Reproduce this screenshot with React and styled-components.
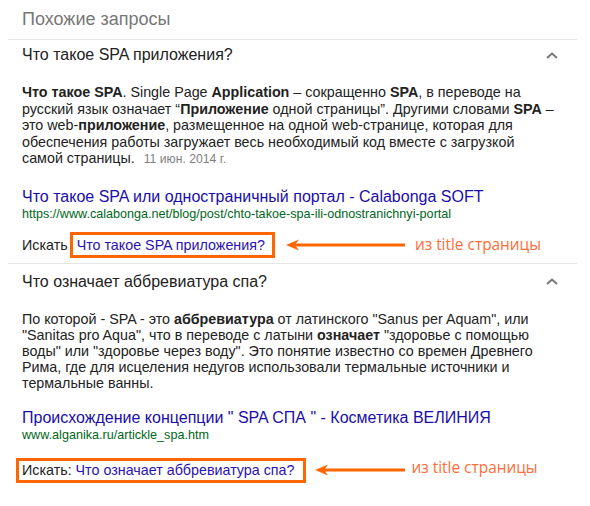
import React from "react";
import styled, { createGlobalStyle } from "styled-components";

const Global = createGlobalStyle`
  html, body { margin: 0; padding: 0; background: #fff; }
  body { font-family: Arial, "Liberation Sans", sans-serif; }
`;

const Page = styled.div`
  width: 590px;
  height: 506px;
  overflow: hidden;
  background: #fff;
  padding-left: 8px;
  box-sizing: border-box;
`;

const Panel = styled.div`
  width: 569px;
`;

const Heading = styled.div`
  height: 40px;
  box-sizing: border-box;
  padding: 7px 0 0 14px;
  font-size: 18px;
  line-height: 24px;
  color: #777;
  border-bottom: 1px solid #e6e6e6;
`;

const Item = styled.div`
  border-bottom: ${(p) => (p.$last ? "none" : "1px solid #e6e6e6")};
  padding: 0 0 ${(p) => p.$pb}px 14px;
`;

const Question = styled.div`
  display: flex;
  align-items: center;
  justify-content: space-between;
  height: 30px;
  margin-top: ${(p) => p.$mt}px;
  padding-right: 19px;
  font-size: 16px;
  color: #222;
`;

const Chevron = () => (
  <svg width="12" height="7" viewBox="0 0 12 7">
    <path d="M1 6 L6 1.5 L11 6" fill="none" stroke="#777" strokeWidth="2" />
  </svg>
);

const Body = styled.div`
  margin-top: ${(p) => p.$mt}px;
  font-size: 14.3px;
  line-height: ${(p) => p.$lh}px;
  color: #222;
  white-space: nowrap;
  b { font-weight: bold; }
`;

const DateMark = styled.span`
  color: #808080;
  font-size: 12.2px;
  margin-left: 5px;
`;

const Title = styled.div`
  margin-top: ${(p) => p.$mt}px;
  font-size: 16px;
  line-height: 19px;
  color: #1a0dab;
  white-space: nowrap;
`;

const Url = styled.div`
  font-size: 12.6px;
  line-height: 16px;
  color: #006621;
  white-space: nowrap;
`;

const SearchRow = styled.div`
  display: flex;
  align-items: center;
  margin-top: ${(p) => p.$mt}px;
  margin-left: ${(p) => p.$ml}px;
`;

const Boxed = styled.div`
  display: flex;
  align-items: center;
  height: ${(p) => p.$h}px;
  box-sizing: border-box;
  border: 3px solid #ff6600;
  padding: 0 ${(p) => p.$pr}px 0 ${(p) => p.$pl}px;
  font-size: 14.3px;
  color: #222;
  white-space: nowrap;
`;

const Plain = styled.span`
  font-size: 14.3px;
  color: #222;
  margin-right: 2px;
`;

const LinkText = styled.span`
  color: #2a12b0;
`;

const Arrow = styled.svg`
  margin-left: ${(p) => p.$ml}px;
  flex: none;
`;

const Note = styled.span`
  margin-left: ${(p) => p.$ml}px;
  position: relative;
  top: ${(p) => p.$dy}px;
  font-family: "Open Sans", "Noto Sans", sans-serif;
  font-size: 15.4px;
  color: #ff6d3a;
  white-space: nowrap;
`;

const ArrowIcon = ({ w, ml }) => (
  <Arrow $ml={ml} width={w} height="12" viewBox={`0 0 ${w} 12`}>
    <line x1="8" y1="6" x2={w} y2="6" stroke="#ff6600" strokeWidth="3" />
    <path d="M0 6 L13 0.5 L9 6 L13 11.5 Z" fill="#ff6600" />
  </Arrow>
);

export default function App() {
  return (
    <Page>
      <Global />
      <Panel>
        <Heading>Похожие запросы</Heading>
        <Item $pb={5}>
          <Question $mt={0}>
            <span>Что такое SPA приложения?</span>
            <Chevron />
          </Question>
          <Body $mt={14} $lh={16.6}>
            <b>Что такое SPA</b>. Single Page <b>Application</b> – сокращенно <b>SPA</b>, в переводе на
            <br />
            русский язык означает “<b>Приложение</b> одной страницы”. Другими словами <b>SPA</b> –
            <br />
            это web-<b>приложение</b>, размещенное на одной web-странице, которая для
            <br />
            обеспечения работы загружает весь необходимый код вместе с загрузкой
            <br />
            самой страницы. <DateMark>11 июн. 2014 г.</DateMark>
          </Body>
          <Title $mt={19}>Что такое SPA или одностраничный портал - Calabonga SOFT</Title>
          <Url>https://www.calabonga.net/blog/post/chto-takoe-spa-ili-odnostranichnyi-portal</Url>
          <SearchRow $mt={10} $ml={0}>
            <Plain>Искать</Plain>
            <Boxed $h={26} $pl={4} $pr={7}>
              <LinkText>Что такое SPA приложения?</LinkText>
            </Boxed>
            <ArrowIcon w={119} ml={11} />
            <Note $ml={10} $dy={0}>из title страницы</Note>
          </SearchRow>
        </Item>
        <Item $pb={0} $last>
          <Question $mt={3}>
            <span>Что означает аббревиатура спа?</span>
            <Chevron />
          </Question>
          <Body $mt={14} $lh={16}>
            По которой - SPA - это <b>аббревиатура</b> от латинского "Sanus per Aquam", или
            <br />
            "Sanitas pro Aqua", что в переводе с латыни <b>означает</b> "здоровье с помощью
            <br />
            воды" или "здоровье через воду". Это понятие известно со времен Древнего
            <br />
            Рима, где для исцеления недугов использовали термальные источники и
            <br />
            термальные ванны.
          </Body>
          <Title $mt={17}>Происхождение концепции " SPA СПА " - Косметика ВЕЛИНИЯ</Title>
          <Url>www.alganika.ru/artickle_spa.htm</Url>
          <SearchRow $mt={15} $ml={-6}>
            <Boxed $h={25} $pl={3} $pr={8}>
              Искать:&nbsp;<LinkText>Что означает аббревиатура спа?</LinkText>
            </Boxed>
            <ArrowIcon w={90} ml={9} />
            <Note $ml={7} $dy={-3}>из title страницы</Note>
          </SearchRow>
        </Item>
      </Panel>
    </Page>
  );
}
